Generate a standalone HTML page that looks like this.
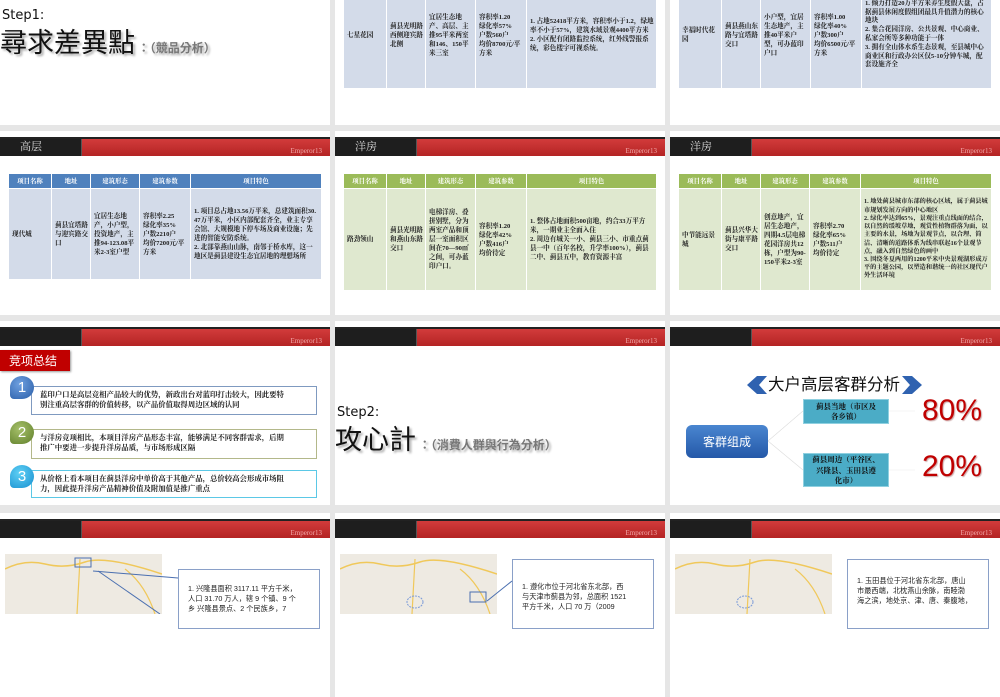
<!DOCTYPE html>
<html><head><meta charset="utf-8">
<style>
*{margin:0;padding:0;box-sizing:border-box}
body{width:1000px;height:600px;background:#e6e6e6;position:relative;overflow:hidden;font-family:"Liberation Sans","Noto Sans CJK SC",sans-serif}
.s{position:absolute;width:330px;height:184px;background:#fff;overflow:hidden}
.hd{position:absolute;left:0;top:6px;width:330px;height:19px;background:linear-gradient(#d23b3b,#b42424);border-top:2px solid #222}
.hd .dk{position:absolute;left:0;top:0;width:82px;height:17px;background:#1e1e1e;border-right:1px solid #555;color:#ddd;font:11px "Liberation Serif","Noto Serif CJK SC",serif;padding-left:20px;line-height:17px}
.hd .em{position:absolute;right:8px;bottom:1px;color:#f3a9a9;font:7px "Liberation Serif",serif}
table{position:absolute;border-collapse:collapse;table-layout:fixed;font:bold 6.6px/9px "Liberation Serif","Noto Serif CJK SC",serif;color:#222}
td{border:1px solid #fff;padding:0 2px 0 3px;vertical-align:middle;word-break:break-all}
th{border:1px solid #fff;color:#fff;font-weight:bold;height:15px;font-size:6.4px}
.b td{background:#d3dbe9}.b th{background:#4f81bd}
.g td{background:#dfe8cf}.g th{background:#9bbb59}
.it{position:absolute;left:31px;width:286px;border:1.5px solid;font:bold 7.4px/10px "Liberation Serif","Noto Serif CJK SC",serif;color:#222;padding:3px 0 0 8px;background:#fff;white-space:nowrap}
.ci{position:absolute;left:10px;width:24px;height:23px;border-radius:50% 50% 50% 4px;color:#fff;font:15px "Liberation Sans",sans-serif;text-align:center;line-height:23px}
.map{position:absolute;width:157px;height:60px;background:#eeeae2}
.cb{position:absolute;width:142px;height:60px;border:1px solid #8aa0c8;background:#fff;font:7.2px/10px "Liberation Sans","Noto Sans CJK SC",sans-serif;color:#222;padding:14px 0 0 9px}
.big{position:absolute;left:0;font:27px 'Noto Sans CJK TC',sans-serif;color:#111;text-shadow:2px 2px 2px #aaa;white-space:nowrap}
.big span{font-size:12px;color:#777;font-weight:bold}
</style></head><body>

<div class="s" style="left:0;top:-59px">
 <div style="position:absolute;left:2px;top:67px;font:13px 'DejaVu Sans',sans-serif;color:#111">Step1:</div>
 <div class="big" style="top:80px">尋求差異點<span> ：（競品分析）</span></div>
</div>
<div class="s" style="left:335px;top:-59px">
 <table class="b" style="left:8px;top:40px;width:314px"><colgroup><col style="width:43px"><col style="width:39px"><col style="width:50px"><col style="width:51px"><col></colgroup>
 <tr style="height:107px"><td>七星花园</td><td>蓟县光明路西侧迎宾路北侧</td><td>宜居生态地产、高层、主推95平米两室和146、150平米三室</td><td>容积率1.20<br>绿化率57%<br>户数560户<br>均价8700元/平方米</td><td>1. 占地52418平方米，容积率小于1.2，绿地率不小于57%，建筑水域景观4400平方米<br>2. 小区配有闭路监控系统，红外线警报系统，彩色楼宇可视系统。</td></tr></table>
</div>
<div class="s" style="left:670px;top:-59px">
 <table class="b" style="left:8px;top:40px;width:314px"><colgroup><col style="width:43px"><col style="width:39px"><col style="width:50px"><col style="width:51px"><col></colgroup>
 <tr style="height:107px"><td>幸福时代花园</td><td>蓟县燕山东路与宜塔路交口</td><td>小户型，宜居生态地产，主推40平米户型，可办蓝印户口</td><td>容积率1.00<br>绿化率40%<br>户数300户<br>均价6500元/平方米</td><td style="line-height:8.8px">1. 倾力打造20万平方米养生度假大盘，占据蓟县休闲度假组团最具升值潜力的核心地块<br>2. 集合花园洋房、公共景观、中心商业、私家会所等多种功能于一体<br>3. 拥有全山体水系生态景观，至县城中心商业区和行政办公区仅5-10分钟车城，配套设施齐全</td></tr></table>
</div>

<div class="s" style="left:0;top:131px">
 <div class="hd"><div class="dk">高层</div><div class="em">Emperor13</div></div>
 <table class="b" style="left:8px;top:42px;width:314px"><colgroup><col style="width:43px"><col style="width:39px"><col style="width:49px"><col style="width:51px"><col></colgroup>
 <tr><th>项目名称</th><th>地址</th><th>建筑形态</th><th>建筑参数</th><th>项目特色</th></tr>
 <tr style="height:91px"><td>现代城</td><td>蓟县宜塔路与迎宾路交口</td><td>宜居生态地产，小户型，投资地产，主推94-123.08平米2-3室户型</td><td>容积率2.25<br>绿化率35%<br>户数2210户<br>均价7200元/平方米</td><td>1. 项目总占地13.56万平米，总建筑面积30.47万平米，小区内部配套齐全，业主专享会馆、大规模地下停车场及商业设施；先进的智能安防系统。<br>2. 北部靠燕山山脉，南邻于桥水库，这一地区是蓟县建设生态宜居地的理想场所</td></tr></table>
</div>
<div class="s" style="left:335px;top:131px">
 <div class="hd"><div class="dk">洋房</div><div class="em">Emperor13</div></div>
 <table class="g" style="left:8px;top:42px;width:314px"><colgroup><col style="width:43px"><col style="width:39px"><col style="width:50px"><col style="width:51px"><col></colgroup>
 <tr><th>项目名称</th><th>地址</th><th>建筑形态</th><th>建筑参数</th><th>项目特色</th></tr>
 <tr style="height:102px"><td>路劲领山</td><td>蓟县光明路和燕山东路交口</td><td>电梯洋房、叠拼别墅，分为两室产品和顶层一室面积区间在70—90㎡之间，可办蓝印户口。</td><td>容积率1.20<br>绿化率42%<br>户数416户<br>均价待定</td><td>1. 整体占地面积500亩地，约合33万平方米，一期业主全面入住<br>2. 周边有城关一小、蓟县三小、市重点蓟县一中（百年名校，升学率100%），蓟县二中、蓟县五中，教育资源丰富</td></tr></table>
</div>
<div class="s" style="left:670px;top:131px">
 <div class="hd"><div class="dk">洋房</div><div class="em">Emperor13</div></div>
 <table class="g" style="left:8px;top:42px;width:314px"><colgroup><col style="width:43px"><col style="width:39px"><col style="width:49px"><col style="width:51px"><col></colgroup>
 <tr><th>项目名称</th><th>地址</th><th>建筑形态</th><th>建筑参数</th><th>项目特色</th></tr>
 <tr style="height:102px"><td>中节能远景城</td><td>蓟县兴华大街与康平路交口</td><td>创意地产，宜居生态地产，四期4.5层电梯花园洋房共12栋，户型为90-150平米2-3室</td><td>容积率2.70<br>绿化率65%<br>户数511户<br>均价待定</td><td style="line-height:8.2px;font-size:6.2px">1. 地处蓟县城市东部的核心区域，属于蓟县城市规划发展方向的中心地区<br>2. 绿化率达到65%，景观注重点线面的结合，以自然的缓坡草地，观赏性植物群落为面，以主要的水景，场地为景观节点，以合理、简洁、清晰的道路体系为线串联起16个景观节点，融入到自然绿色的画中<br>3. 围绕冬夏两用的1200平米中央景观湖形成万平的主题公园，以塑造和谐统一的社区现代户外生活环境</td></tr></table>
</div>

<div class="s" style="left:0;top:321px">
 <div class="hd"><div class="dk"></div><div class="em">Emperor13</div></div>
 <div style="position:absolute;left:0;top:29px;width:70px;height:21px;background:#c00000;color:#fff;font:12px 'Noto Sans CJK SC',sans-serif;line-height:21px;padding-left:9px;box-shadow:1px 1px 2px #999">竞项总结</div>
 <div class="it" style="top:65px;height:29px;border-color:#7f9ac0">蓝印户口是高层竞相产品较大的优势，新政出台对蓝印打击较大，因此要特<br>别注重高层客群的价值转移，以产品价值取得周边区域的认同</div>
 <div class="ci" style="top:55px;background:radial-gradient(circle at 40% 35%,#6fa0e0,#2a5ea8)">1</div>
 <div class="it" style="top:108px;height:30px;border-color:#b3b88a">与洋房竞项相比，本项目洋房产品形态丰富，能够满足不同客群需求，后期<br>推广中要进一步提升洋房品质，与市场形成区隔</div>
 <div class="ci" style="top:100px;background:radial-gradient(circle at 40% 35%,#a6c06a,#5f7f2a)">2</div>
 <div class="it" style="top:149px;height:28px;border-color:#5bc8e6">从价格上看本项目在蓟县洋房中单价高于其他产品，总价较高会形成市场阻<br>力，因此提升洋房产品精神价值及附加值是推广重点</div>
 <div class="ci" style="top:144px;background:radial-gradient(circle at 40% 35%,#5fd0f5,#1890d0)">3</div>
</div>
<div class="s" style="left:335px;top:321px">
 <div class="hd"><div class="dk"></div><div class="em">Emperor13</div></div>
 <div style="position:absolute;left:2px;top:84px;font:13px 'DejaVu Sans',sans-serif;color:#111">Step2:</div>
 <div class="big" style="top:97px">攻心計<span> ：（消費人群與行為分析）</span></div>
</div>
<div class="s" style="left:670px;top:321px">
 <div class="hd"><div class="dk"></div><div class="em">Emperor13</div></div>
 <svg style="position:absolute;left:77px;top:55px" width="20" height="18"><polygon points="20,0 12,9 20,18 10,18 0,9 10,0" fill="#2f62b0"/></svg>
 <div style="position:absolute;left:98px;top:50px;font:16.5px 'Noto Sans CJK SC',sans-serif;color:#111;white-space:nowrap">大户高层客群分析</div>
 <svg style="position:absolute;left:232px;top:55px" width="20" height="18"><polygon points="0,0 10,0 20,9 10,18 0,18 8,9" fill="#2f62b0"/></svg>
 <svg style="position:absolute;left:0;top:0" width="330" height="184"><path d="M98 120 L133 90 M98 120 L133 149" stroke="#ddd" stroke-width="0.6"/><path d="M219 90 L245 90 M219 149 L245 149" stroke="#eee" stroke-width="0.6"/></svg>
 <div style="position:absolute;left:16px;top:104px;width:82px;height:33px;border-radius:6px;background:linear-gradient(#4a86d0,#2458a8);color:#fff;font:12px 'Noto Sans CJK SC',sans-serif;text-align:center;line-height:33px">客群组成</div>
 <div style="position:absolute;left:133px;top:78px;width:86px;height:25px;background:#4bacc6;border:1px solid #8fd0e0;font:bold 7.5px/10px 'Liberation Serif','Noto Serif CJK SC',serif;text-align:center;padding-top:2px;color:#111">蓟县当地（市区及<br>各乡镇）</div>
 <div style="position:absolute;left:133px;top:132px;width:86px;height:34px;background:#4bacc6;border:1px solid #8fd0e0;font:bold 7.5px/10.5px 'Liberation Serif','Noto Serif CJK SC',serif;text-align:center;padding-top:1px;color:#111;white-space:nowrap">蓟县周边（平谷区、<br>兴隆县、玉田县遵<br>化市）</div>
 <div style="position:absolute;left:252px;top:73px;font:30px 'Liberation Sans',sans-serif;color:#c00000;text-shadow:1px 1px 1px #caa">80%</div>
 <div style="position:absolute;left:252px;top:129px;font:30px 'Liberation Sans',sans-serif;color:#c00000;text-shadow:1px 1px 1px #caa">20%</div>
</div>

<div class="s" style="left:0;top:513px">
 <div class="hd"><div class="dk"></div><div class="em">Emperor13</div></div>
 <div class="map" style="left:5px;top:41px"><svg width="157" height="60"><path d="M0 15 Q20 5 40 10 T80 8 T157 20" stroke="#f0c85a" stroke-width="1.5" fill="none"/><path d="M75 5 L72 60 M120 15 Q140 30 150 60" stroke="#f0c85a" stroke-width="1.2" fill="none"/><rect x="70" y="4" width="16" height="9" fill="none" stroke="#4a6fb0"/><path d="M93 17 L155 60" stroke="#4a6fb0"/></svg></div>
 <div class="cb" style="left:178px;top:56px">1. 兴隆县面积 3117.11 平方千米，<br>人口 31.70 万人，辖 9 个镇、9 个<br>乡 兴隆县景点、2 个民族乡，7</div>
 <svg style="position:absolute;left:0;top:0" width="330" height="184"><path d="M93 58 L178 65" stroke="#4a6fb0"/></svg>
</div>
<div class="s" style="left:335px;top:513px">
 <div class="hd"><div class="dk"></div><div class="em">Emperor13</div></div>
 <div class="map" style="left:5px;top:41px"><svg width="157" height="60"><path d="M0 15 Q20 5 40 10 T80 8 T157 20" stroke="#f0c85a" stroke-width="1.5" fill="none"/><path d="M75 5 L72 60 M120 15 Q140 30 150 60" stroke="#f0c85a" stroke-width="1.2" fill="none"/><rect x="130" y="38" width="16" height="10" fill="none" stroke="#4a6fb0"/><ellipse cx="75" cy="48" rx="8" ry="6" fill="none" stroke="#7a9ad8" stroke-dasharray="2 1"/></svg></div>
 <div class="cb" style="left:177px;top:46px;height:70px;padding-top:22px">1. 遵化市位于河北省东北部，西<br>与天津市蓟县为邻，总面积 1521<br>平方千米，人口 70 万（2009</div>
 <svg style="position:absolute;left:0;top:0" width="330" height="184"><path d="M152 88 L177 68" stroke="#4a6fb0"/></svg>
</div>
<div class="s" style="left:670px;top:513px">
 <div class="hd"><div class="dk"></div><div class="em">Emperor13</div></div>
 <div class="map" style="left:5px;top:41px"><svg width="157" height="60"><path d="M0 15 Q20 5 40 10 T80 8 T157 20" stroke="#f0c85a" stroke-width="1.5" fill="none"/><path d="M75 5 L72 60 M120 15 Q140 30 150 60" stroke="#f0c85a" stroke-width="1.2" fill="none"/><ellipse cx="70" cy="48" rx="8" ry="6" fill="none" stroke="#7a9ad8" stroke-dasharray="2 1"/></svg></div>
 <div class="cb" style="left:177px;top:46px;height:70px;padding-top:16px">1. 玉田县位于河北省东北部，唐山<br>市最西端，北枕燕山余脉，南睦渤<br>海之滨，地处京、津、唐、秦腹地，</div>
</div>
</body></html>
